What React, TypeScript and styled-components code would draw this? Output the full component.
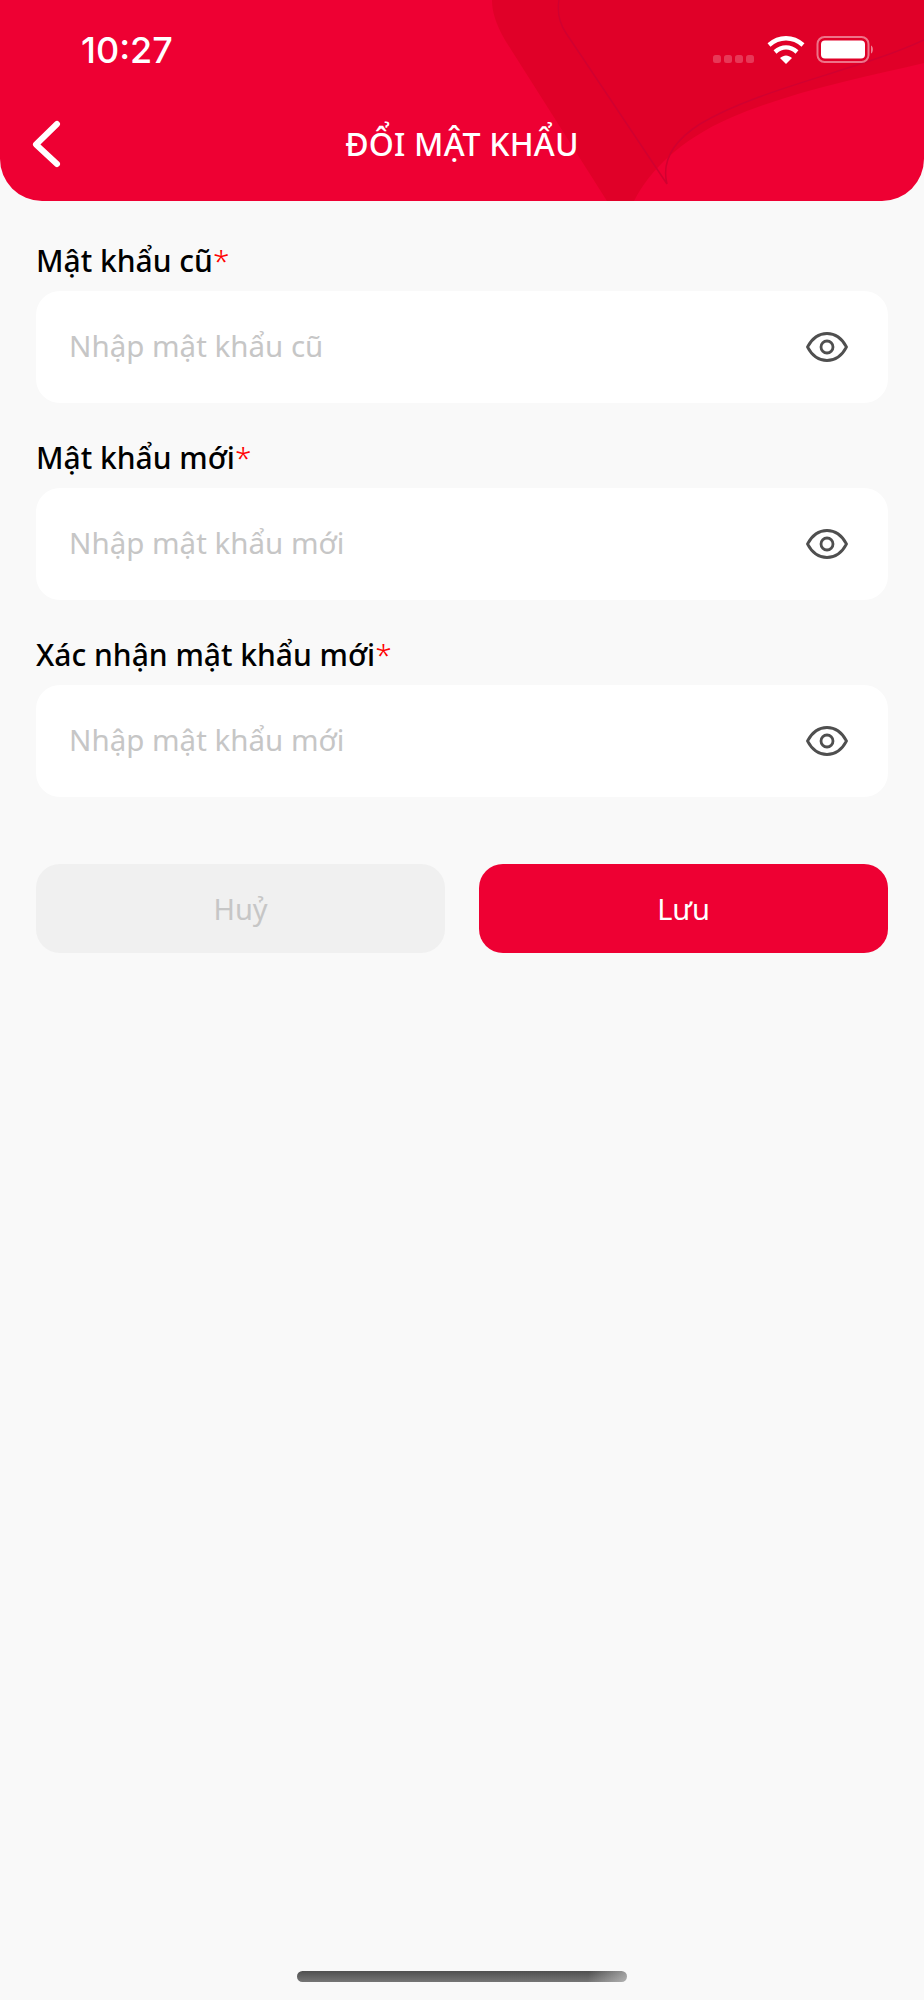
import React from "react";
import styled, { createGlobalStyle } from "styled-components";

const Global = createGlobalStyle`
  html, body { margin: 0; padding: 0; background: #f9f9f9; }
  body { font-family: "Noto Sans", "Open Sans", "Liberation Sans", sans-serif; }
`;

const Page = styled.div`
  width: 924px;
  height: 2000px;
  background: #f9f9f9;
  display: flex;
  flex-direction: column;
  position: relative;
  overflow: hidden;
`;

const Header = styled.header`
  position: relative;
  height: 201px;
  flex: none;
  background: #ee0033;
  border-radius: 0 0 42px 42px;
  overflow: hidden;
  display: flex;
  flex-direction: column;
  color: #fff;
`;

const Decoration = styled.svg`
  position: absolute;
  inset: 0;
`;

const StatusBar = styled.div`
  position: relative;
  height: 100px;
  flex: none;
  display: flex;
  align-items: flex-start;
  justify-content: space-between;
  padding: 28px 48px 0 81px;
  box-sizing: border-box;
`;

const Time = styled.span`
  font-family: "Inter", sans-serif;
  font-size: 36px;
  font-weight: 500;
  line-height: 44px;
`;

const StatusIcons = styled.svg`
  margin-top: 8px;
`;

const NavBar = styled.div`
  position: relative;
  flex: 1;
  display: flex;
  align-items: center;
  justify-content: center;
  padding-bottom: 14px;
`;

const BackIcon = styled.svg`
  position: absolute;
  left: 31px;
  top: 20px;
`;

const Title = styled.h1`
  margin: 0;
  font-size: 32px;
  font-weight: 500;
  line-height: 40px;
  letter-spacing: 0.2px;
`;

const Form = styled.main`
  display: flex;
  flex-direction: column;
  gap: 35px;
  padding: 40px 36px 0;
`;

const Field = styled.div`
  display: flex;
  flex-direction: column;
  gap: 11px;
`;

const Label = styled.label`
  font-size: 30px;
  font-weight: 500;
  line-height: 39px;
  color: #000;
`;

const Star = styled.span`
  color: #f00;
  font-weight: 300;
`;

const InputBox = styled.div`
  height: 112px;
  background: #fff;
  border-radius: 24px;
  display: flex;
  align-items: center;
  justify-content: space-between;
  padding: 0 40px 0 33px;
`;

const Placeholder = styled.span`
  font-size: 29.500px;
  font-weight: 400;
  line-height: 40px;
  margin-bottom: 2px;
  color: #c6c6c6;
`;

const Actions = styled.div`
  display: grid;
  grid-template-columns: 1fr 1fr;
  gap: 34px;
  margin-top: 32px;
`;

const Button = styled.button<{ $primary?: boolean }>`
  height: 89px;
  border: 0;
  border-radius: 24px;
  font-family: inherit;
  font-size: 29px;
  background: ${(p) => (p.$primary ? "#ee0033" : "#f0f0f0")};
  color: ${(p) => (p.$primary ? "#fff" : "#c6c6c6")};
`;

const HomeIndicator = styled.div`
  position: absolute;
  left: 297px;
  top: 1971px;
  width: 330px;
  height: 11px;
  border-radius: 6px;
  background:
    linear-gradient(100deg, rgba(250, 250, 250, 0) 88%, rgba(250, 250, 250, 0.45) 100%),
    linear-gradient(to bottom, #505050, #767676);
`;

const Eye = () => (
  <svg width="42" height="30" viewBox="0 0 42 30" fill="none" stroke="#4f4f4f" strokeWidth="2.800">
    <path d="M1.500 15C6 6.500 13 1.500 21 1.500s15 5 19.500 13.500C36 23.500 29 28.500 21 28.500S6 23.500 1.500 15Z" strokeLinejoin="round" />
    <circle cx="21" cy="15" r="6" />
  </svg>
);

const fields = [
  { label: "Mật khẩu cũ", placeholder: "Nhập mật khẩu cũ" },
  { label: "Mật khẩu mới", placeholder: "Nhập mật khẩu mới" },
  { label: "Xác nhận mật khẩu mới", placeholder: "Nhập mật khẩu mới" },
];

export default function App() {
  return (
    <Page>
      <Global />
      <Header>
        <Decoration width="924" height="201" viewBox="0 0 924 201" fill="none">
          <path
            d="M492 0C492 12 496 24 505 40L607 201H634C650 170 680 140 730 118C790 92 860 78 924 63V0Z"
            fill="#e00028"
          />
          <path
            d="M559 0C557 12 560 24 566 33L667 184C661 160 675 140 700 124C760 88 860 70 924 40"
            stroke="#d10030"
            strokeWidth="1.500"
          />
        </Decoration>
        <StatusBar>
          <Time>10:27</Time>
          <StatusIcons width="164" height="30" viewBox="0 0 164 30" fill="none">
            <g fill="#fff" fillOpacity="0.22">
              <rect x="1" y="19" width="8" height="8" rx="2.500" />
              <rect x="12" y="19" width="8" height="8" rx="2.500" />
              <rect x="23" y="19" width="8" height="8" rx="2.500" />
              <rect x="34" y="19" width="8" height="8" rx="2.500" />
            </g>
            <g stroke="#fff" strokeWidth="4.400">
              <path d="M57 9C67 0 81 0 91 9" />
              <path d="M63 16C70 10 78 10 85 16" />
            </g>
            <path d="M68 22C72 18.500 76 18.500 80 22L74 28Z" fill="#fff" />
            <rect x="105.500" y="1" width="51" height="25" rx="7" stroke="#fff" strokeOpacity="0.45" strokeWidth="2" />
            <rect x="109" y="4.500" width="44" height="18" rx="4" fill="#fff" />
            <path d="M159 9.500C161.500 10.500 161.500 16.500 159 17.500Z" fill="#fff" fillOpacity="0.5" />
          </StatusIcons>
        </StatusBar>
        <NavBar>
          <BackIcon width="30" height="48" viewBox="0 0 30 48" fill="none">
            <path d="M26 4L5 24.500L26 44" stroke="#fff" strokeWidth="6" strokeLinecap="round" strokeLinejoin="round" />
          </BackIcon>
          <Title>ĐỔI MẬT KHẨU</Title>
        </NavBar>
      </Header>
      <Form>
        {fields.map((f) => (
          <Field key={f.label}>
            <Label>
              {f.label}
              <Star>*</Star>
            </Label>
            <InputBox>
              <Placeholder>{f.placeholder}</Placeholder>
              <Eye />
            </InputBox>
          </Field>
        ))}
        <Actions>
          <Button>Huỷ</Button>
          <Button $primary>Lưu</Button>
        </Actions>
      </Form>
      <HomeIndicator />
    </Page>
  );
}
